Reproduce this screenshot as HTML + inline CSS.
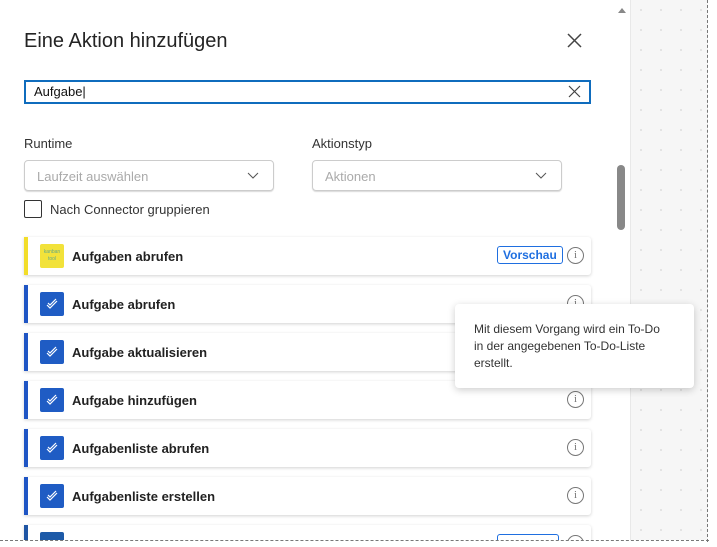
<!DOCTYPE html>
<html><head><style>
body{margin:0;width:717px;height:547px;overflow:hidden;background:#fff;font-family:"Liberation Sans",sans-serif;position:relative}
.panel{position:absolute;left:0;top:0;width:613px;height:540px;background:#fff;overflow:hidden}
.sb{position:absolute;left:613px;top:0;width:17px;height:540px;background:#fff}
.gray{position:absolute;left:630px;top:0;width:77px;height:540px;background:#f6f6f6;border-left:1px solid #e8e8e8;
background-image:radial-gradient(#ddd 1px,transparent 1px);background-size:20px 20px}
.edge{position:absolute;left:707px;top:0;width:2px;height:542px;border-left:1px dashed #777}
.bedge{position:absolute;left:0;top:540px;width:709px;height:2px;border-top:1px dashed #777}
h1{position:absolute;left:24px;top:30px;margin:0;font-size:20px;font-weight:normal;color:#242424}
.x{position:absolute;color:#444}
.search{position:absolute;left:24px;top:80px;width:555px;height:20px;border:2px solid #0f6cbd;font-size:13px;line-height:20px;padding-left:8px;color:#111}
.lbl{position:absolute;font-size:13px;color:#333}
.dd{position:absolute;top:160px;width:250px;height:31px;border:1px solid #ccc;border-radius:4px;font-size:13px;color:#aaa;line-height:31px;padding-left:12px;box-sizing:border-box;box-shadow:0 1px 1px rgba(0,0,0,.15)}
.dd svg{position:absolute;right:14px;top:11px}
.cb{position:absolute;left:24px;top:200px;width:16px;height:16px;border:1px solid #333;border-radius:2px}
.card{position:absolute;left:24px;width:567px;height:38px;background:#fff;border-left:4px solid #1f55c4;box-sizing:border-box;box-shadow:0 1px 3px rgba(0,0,0,.18);border-radius:0 3px 3px 0}
.card .ic{position:absolute;left:12px;top:7px;width:24px;height:24px;background:#1f5cc4;border-radius:2px}
.card .t{position:absolute;left:44px;top:12px;font-size:13px;font-weight:bold;color:#222}
.card .i{position:absolute;left:539px;top:10px;width:15px;height:15px;border:1px solid #777;border-radius:50%;font-size:11px;line-height:15px;text-align:center;color:#777;font-family:"Liberation Serif",serif}
.badge{position:absolute;left:469px;top:9px;border:1px solid #1f6fe0;border-radius:3px;color:#1f6fe0;font-size:12px;font-weight:bold;padding:1px 5px}
.tip{position:absolute;left:455px;top:304px;width:239px;height:84px;background:#fff;border-radius:4px;box-shadow:0 2px 8px rgba(0,0,0,.2);font-size:12px;color:#333;line-height:17px;padding:17px 0 0 19px;box-sizing:border-box}
</style></head><body>
<div class="panel">
<h1>Eine Aktion hinzufügen</h1>
<svg class="x" style="left:567px;top:33px" width="15" height="15"><path d="M1 1L14 14M14 1L1 14" stroke="#444" stroke-width="1.5"/></svg>
<div class="search">Aufgabe|</div>
<svg class="x" style="left:568px;top:85px" width="13" height="13"><path d="M1 1L12 12M12 1L1 12" stroke="#444" stroke-width="1.2"/></svg>
<div class="lbl" style="left:24px;top:136px">Runtime</div>
<div class="lbl" style="left:312px;top:136px">Aktionstyp</div>
<div class="dd" style="left:24px">Laufzeit auswählen<svg width="12" height="8"><path d="M1 1L6 6L11 1" stroke="#555" fill="none"/></svg></div>
<div class="dd" style="left:312px">Aktionen<svg width="12" height="8"><path d="M1 1L6 6L11 1" stroke="#555" fill="none"/></svg></div>
<div class="cb"></div>
<div class="lbl" style="left:50px;top:202px">Nach Connector gruppieren</div>

<div class="card" style="top:237px;border-left-color:#f2dd2a"><div class="ic" style="background:#f2e23a;font-size:5px;color:#6a8;text-align:center;line-height:7px;padding-top:5px;box-sizing:border-box">kanban<br>tool</div><div class="t">Aufgaben abrufen</div><div class="badge">Vorschau</div><div class="i">i</div></div>
<div class="card" style="top:285px"><div class="ic"></div><div class="t">Aufgabe abrufen</div><div class="i">i</div></div>
<div class="card" style="top:333px"><div class="ic"></div><div class="t">Aufgabe aktualisieren</div></div>
<div class="card" style="top:381px"><div class="ic"></div><div class="t">Aufgabe hinzufügen</div><div class="i">i</div></div>
<div class="card" style="top:429px"><div class="ic"></div><div class="t">Aufgabenliste abrufen</div><div class="i">i</div></div>
<div class="card" style="top:477px"><div class="ic"></div><div class="t">Aufgabenliste erstellen</div><div class="i">i</div></div>
<div class="card" style="top:525px;border-left-color:#1f55a4"><div class="ic" style="background:#1d5aa8"></div><div class="t" style="top:14px">Aufgabe erstellen</div><div class="badge" style="top:9px;left:469px;width:50px;height:14px"></div><div class="i"></div></div>
</div>
<div class="sb"><div style="position:absolute;left:4px;top:165px;width:8px;height:65px;background:#888;border-radius:4px"></div><div style="position:absolute;left:5px;top:8px;width:0;height:0;border:4px solid transparent;border-bottom:5px solid #888;border-top:0"></div></div>
<div class="gray"></div>
<div class="edge"></div>
<div class="bedge"></div>
<div class="tip">Mit diesem Vorgang wird ein To-Do<br>in der angegebenen To-Do-Liste<br>erstellt.</div>
<script>
document.querySelectorAll('.card .ic').forEach((e,i)=>{if(i>0&&i<6)e.innerHTML='<svg width="24" height="24"><path d="M7 13l3 3 7-7M8 11l2 2 6-6" stroke="#fff" stroke-width="1.2" fill="none"/></svg>'});
</script>
</body></html>
